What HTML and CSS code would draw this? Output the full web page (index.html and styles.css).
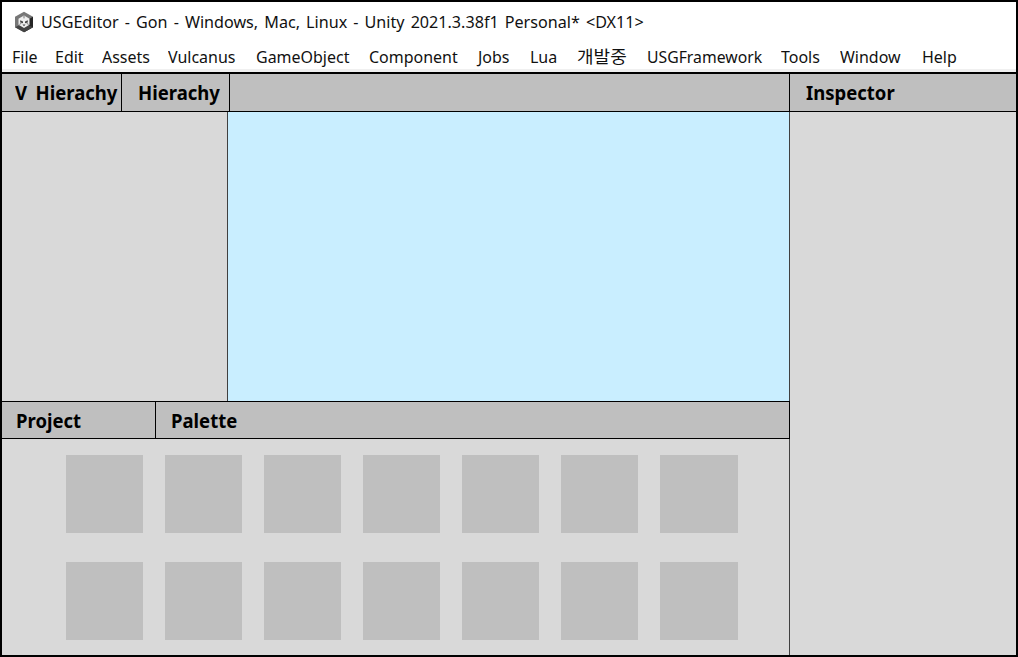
FILE: index.html
```html
<!DOCTYPE html>
<html lang="ko">
<head>
<meta charset="utf-8">
<title>USGEditor</title>
<link rel="stylesheet" href="styles.css">
</head>
<body>
<div class="window">
  <header class="chrome">
    <div class="titlebar">
      <svg class="logo" viewBox="0 0 20 22">
        <path d="M10 .8 19 5.8V16.2L10 21.2 1 16.2V5.8Z" fill="#777"/>
        <path d="M10 11 19 5.8V16.2L10 21.2Z" fill="#252525"/>
        <path d="M1 16.2 10 21.2 19 16.2 10 12Z" fill="#444"/>
        <path d="M10 4.5 15.5 7.7V13.8L10 17 4.5 13.8V7.7Z" fill="#eee"/>
        <path d="M10 5V7.4M5.4 13.4 7.4 12.3M14.6 13.4 12.6 12.3" stroke="#777" stroke-width="1"/>
        <path d="M6.2 9.3 9 10.6V12.2L6.2 11.4ZM13.8 9.3 11 10.6V12.2L13.8 11.4ZM8.5 13.6H11.5L10 15.2Z" fill="#444"/>
      </svg>
      <span class="title">USGEditor - Gon - Windows, Mac, Linux - Unity 2021.3.38f1 Personal* &lt;DX11&gt;</span>
    </div>
    <nav class="menu">
      <span class="m-file">File</span><span class="m-edit">Edit</span><span class="m-assets">Assets</span><span class="m-vulcanus">Vulcanus</span><span class="m-object">GameObject</span><span class="m-component">Component</span><span class="m-jobs">Jobs</span><span class="m-lua">Lua</span><span class="m-dev">개발중</span><span class="m-framework">USGFramework</span><span class="m-tools">Tools</span><span class="m-window">Window</span><span class="m-help">Help</span>
    </nav>
  </header>
  <main class="workspace">
    <div class="left">
      <div class="tabs"><div class="tab vhier"><span>V Hierachy</span></div><div class="tab hier"><span>Hierachy</span></div></div>
      <div class="upper"><div class="tree"></div><div class="scene"></div></div>
      <div class="tabs lower-tabs"><div class="tab project"><span>Project</span></div><div class="tab palette-tab"><span>Palette</span></div></div>
      <div class="palette">
        <i></i><i></i><i></i><i></i><i></i><i></i><i></i>
        <i></i><i></i><i></i><i></i><i></i><i></i><i></i>
      </div>
    </div>
    <aside class="inspector"><div class="tabs"><div class="inspector-tab"><span>Inspector</span></div></div></aside>
  </main>
</div>
</body>
</html>
```
FILE: styles.css
```css
* { box-sizing: border-box; }
body { margin: 0; font-family: "Noto Sans", "Noto Sans CJK KR", sans-serif; color: #111; }
.window { width: 1018px; height: 657px; border: 2px solid #000; display: flex; flex-direction: column; background: #d9d9d9; overflow: hidden; }
.chrome { height: 72px; flex: none; background: #fff; border-bottom: 2px solid #000; box-shadow: inset 0 -3px #f0f0f0; }
.titlebar { height: 40px; padding-left: 12px; display: flex; align-items: center; }
.logo { width: 20px; height: 22px; margin-right: 7px; flex: none; }
.title { font-size: 17px; line-height: 24px; word-spacing: 2px; white-space: nowrap; transform-origin: left; transform: scaleX(.949); }
.menu { display: flex; height: 28px; padding-left: 10px; font-size: 17px; line-height: 30px; white-space: nowrap; }
.menu span { transform-origin: left; transform: scaleX(.94); flex: none; }
.m-file { width: 43px; }
.m-edit { width: 47px; }
.m-assets { width: 66px; }
.m-vulcanus { width: 88px; }
.m-object { width: 113px; }
.m-component { width: 109px; }
.m-jobs { width: 52px; }
.m-lua { width: 47px; }
.menu .m-dev { width: 70px; transform: scaleX(1.06); }
.menu .m-framework { width: 134px; transform: scaleX(.928); }
.m-tools { width: 59px; }
.m-window { width: 82px; }
.m-help { width: 50px; }
.workspace { flex: 1; display: flex; min-height: 0; }
.left { width: 788px; border-right: 1px solid #404040; display: flex; flex-direction: column; }
.tabs { height: 38px; flex: none; display: flex; background: #bfbfbf; border-bottom: 1px solid #000; font-size: 20px; font-weight: 700; line-height: 38px; color: #000; white-space: nowrap; }
.tabs span { display: inline-block; transform-origin: left; transform: scaleX(.925); }
.left .tabs { width: 788px; border-right: 1px solid #000; }
.tab { border-right: 1px solid #000; }
.vhier { width: 120px; padding-left: 13px; word-spacing: 4px; }
.hier { width: 108px; padding-left: 16px; }
.upper { height: 289px; display: flex; }
.tree { width: 226px; border-right: 1px solid #404040; }
.scene { flex: 1; background: #c9eeff; }
.lower-tabs { border-top: 1px solid #000; }
.project { width: 154px; padding-left: 14px; }
.palette-tab { padding-left: 15px; border: 0; }
.palette { padding: 16px 0 0 64px; display: grid; grid-template-columns: repeat(7, 77px); grid-auto-rows: 78px; gap: 29px 22px; }
.palette i { background: #bfbfbf; }
.palette i:nth-child(7n) { width: 78px; }
.inspector { flex: 1; }
.inspector-tab { padding-left: 16px; }
```
